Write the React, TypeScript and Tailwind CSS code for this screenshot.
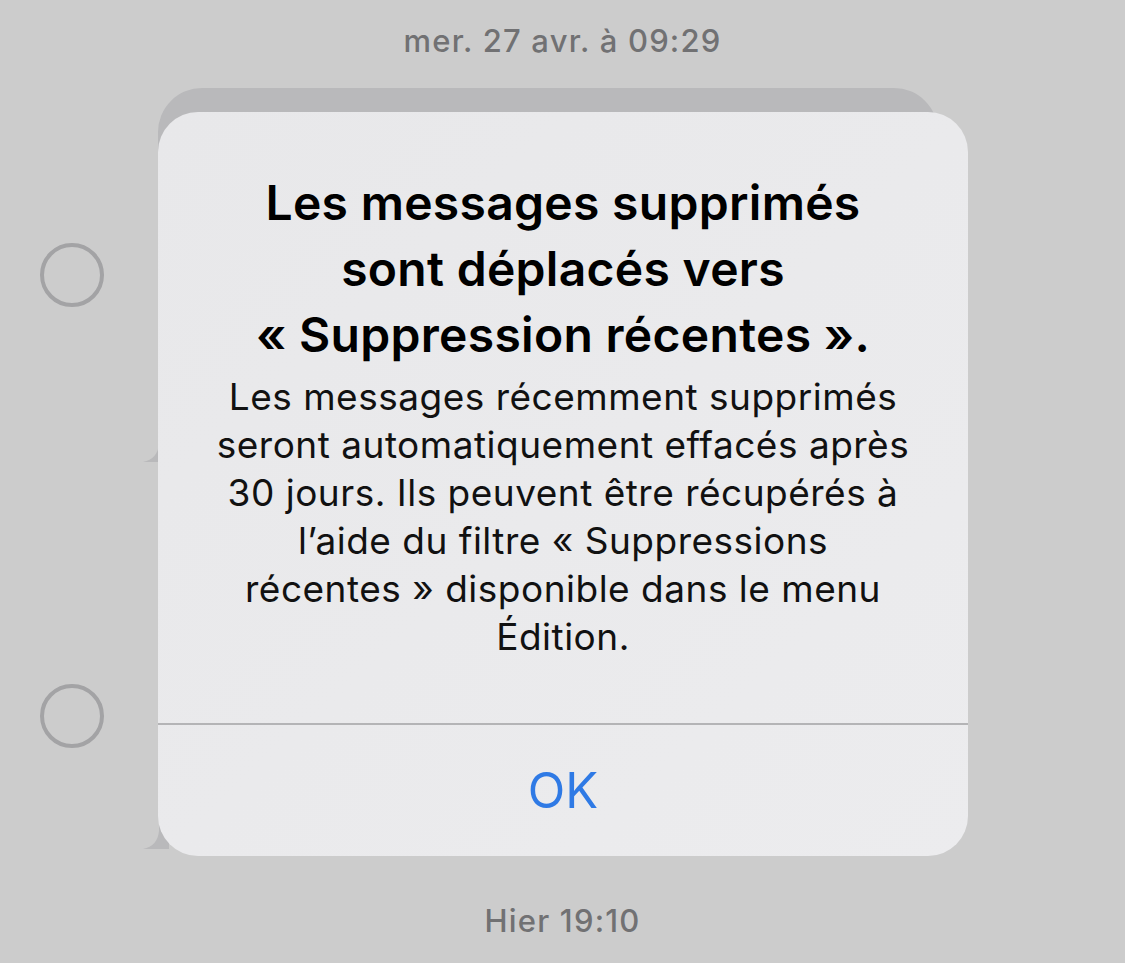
import React from "react";

function Tail({ className }: { className?: string }) {
  return (
    <svg className={className} width="26" height="30" viewBox="0 0 26 30" fill="#b9b9bb">
      <path d="M26 0 L26 30 L0 30 C10 28 15 22 16 12 L16 0 Z" />
    </svg>
  );
}

function Circle() {
  return <div className="w-[64px] h-[64px] rounded-full border-[4px] border-[#a3a3a5] shrink-0" />;
}

export default function App() {
  return (
    <div
      className="relative w-[1125px] h-[963px] bg-[#cccccc] overflow-hidden"
      style={{ fontFamily: "Inter, 'Noto Sans', sans-serif" }}
    >
      <div className="pt-[23px] text-center text-[31px] leading-[36px] font-medium tracking-[1.2px] text-[#717173]">
        mer. 27 avr. à 09:29
      </div>

      <div className="mt-[29px] flex items-center pl-[40px]">
        <Circle />
        <div className="relative ml-[54px] w-[780px] h-[374px] rounded-[44px] bg-[#b9b9bb]">
          <Tail className="absolute left-[-15px] bottom-0" />
        </div>
      </div>

      <div className="mt-[121px] flex items-center pl-[40px]">
        <Circle />
        <div className="relative ml-[54px] w-[780px] h-[266px] rounded-[44px] bg-[#b9b9bb]">
          <Tail className="absolute left-[-15px] bottom-0" />
        </div>
      </div>

      <div className="mt-[54px] text-center text-[31px] leading-[36px] font-medium tracking-[1.2px] text-[#717173]">
        Hier 19:10
      </div>

      <div className="absolute left-[158px] top-[112px] w-[810px] h-[744px] rounded-[40px] bg-gradient-to-br from-[#e8e8ea] to-[#ececee] flex flex-col">
        <div className="flex-1 pt-[58px] px-[20px] text-center">
          <div className="text-[48px] leading-[66px] font-semibold text-black tracking-[0.3px]">
            Les messages supprimés
            <br />
            sont déplacés vers
            <br />« Suppression récentes ».
          </div>
          <div className="mt-[5px] text-[37px] leading-[48px] tracking-[0.5px] text-[#111111]">
            Les messages récemment supprimés
            <br />
            seront automatiquement effacés après
            <br />
            30 jours. Ils peuvent être récupérés à
            <br />
            l’aide du filtre « Suppressions
            <br />
            récentes » disponible dans le menu
            <br />
            Édition.
          </div>
        </div>
        <div className="h-[2px] bg-[#b4b4b6]" />
        <div className="h-[131px] flex items-center justify-center text-[49px] text-[#2f7ae5]">
          OK
        </div>
      </div>
    </div>
  );
}
